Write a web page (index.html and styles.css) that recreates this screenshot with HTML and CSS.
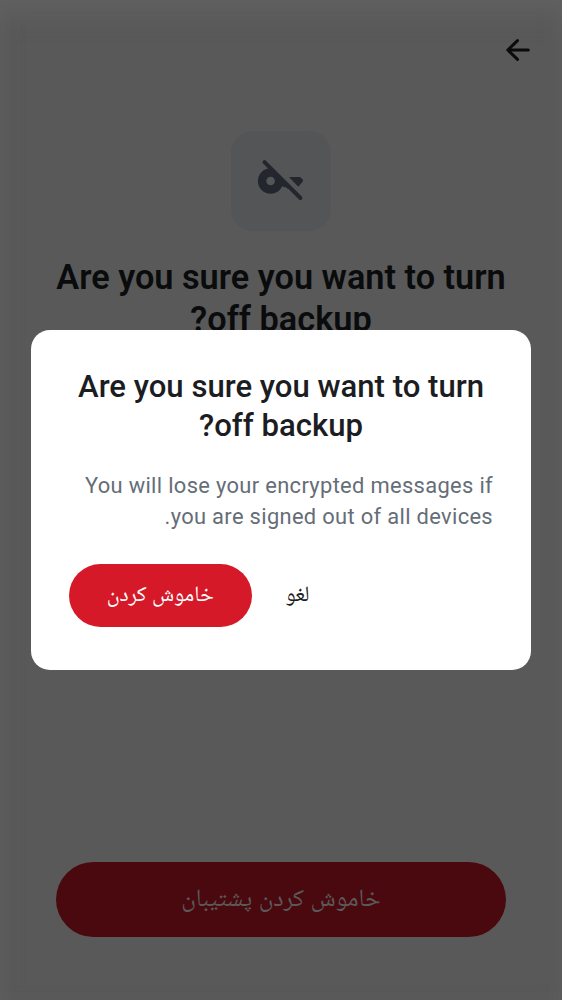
FILE: index.html
```html
<!DOCTYPE html>
<html lang="fa" dir="rtl">
<head>
<meta charset="utf-8">
<meta name="viewport" content="width=device-width">
<title>Backup</title>
<link rel="stylesheet" href="styles.css">
</head>
<body>
<main class="screen">
  <header class="topbar">
    <svg class="back" viewBox="0 0 24 22" aria-label="Back"><path d="M22.3 11H2M11.5 1.6L1.8 11l9.7 9.4"/></svg>
  </header>
  <div class="badge">
    <svg class="key" viewBox="0 0 50 44">
      <clipPath id="below"><path d="M0 -5L50 45H0Z"/></clipPath>
      <g clip-path="url(#below)">
        <circle class="ring" cx="14.6" cy="22" r="8.5"/>
        <path class="fill" d="M22 18H35V29.8H31.5L29.6 27.9L28 28.3L25.6 26.6H22Z"/>
      </g>
      <path class="fill" d="M33 18H44L46.6 20.6Q47.5 21.6 46.6 22.7L42.3 27.7Z"/>
      <path class="slash" d="M8.5 3.1L44.4 39"/>
    </svg>
  </div>
  <h1 class="heading">Are you sure you want to turn off backup?</h1>
  <button class="primary">خاموش کردن پشتیبان</button>
</main>
<div class="scrim">
  <section class="dialog" role="dialog">
    <h2 class="dialog-title">Are you sure you want to turn off backup?</h2>
    <p class="dialog-text">You will lose your encrypted messages if you are signed out of all devices.</p>
    <div class="actions">
      <button class="cancel">لغو</button>
      <button class="confirm">خاموش کردن</button>
    </div>
  </section>
</div>
</body>
</html>
```
FILE: styles.css
```css
* { box-sizing: border-box; }
body { margin: 0; font-family: Roboto, "Noto Naskh Arabic", "Noto Sans Arabic", "DejaVu Sans", sans-serif; }
button { border: 0; padding: 2px 0 0; font-family: inherit; }
.screen {
  display: flex;
  flex-direction: column;
  align-items: center;
  height: 1000px;
  padding: 0 56px 63px;
  background: #595959;
  box-shadow: inset 0 26px 26px -14px #616161, inset 12px 0 20px -10px #5f5f5f, inset -12px 0 20px -10px #5f5f5f;
}
.topbar { align-self: stretch; height: 131px; margin: 0 -24px; padding-top: 39px; }
.back { display: block; width: 24px; height: 22px; fill: none; stroke: #0a0b0c; stroke-width: 3; stroke-linecap: round; stroke-linejoin: round; }
.badge { display: flex; align-items: center; justify-content: center; width: 100px; height: 100px; border-radius: 22px; background: #545557; }
.key { width: 50px; height: 44px; }
.key .fill { fill: #23262c; }
.key .ring { fill: none; stroke: #23262c; stroke-width: 8.4; }
.key .slash { stroke: #23262c; stroke-width: 4; stroke-linecap: round; }
.heading { margin: 25px -10px 0; color: #0a0b0c; font-size: 34.3px; line-height: 42px; font-weight: 600; text-align: center; }
.primary { width: 450px; height: 75px; margin-top: auto; border-radius: 38px; background: #4a090f; color: #5a5a5a; font-size: 24.8px; word-spacing: .5px; }
.scrim { position: absolute; inset: 0; display: flex; align-items: center; justify-content: center; }
.dialog { width: 500px; height: 340px; padding: 37px 38px 43px; border-radius: 19px; background: #fff; }
.dialog-title { margin: 0; color: #1b1d22; font-size: 31.1px; line-height: 39px; font-weight: 500; text-align: center; }
.dialog-text { margin: 25px 0 0; color: #656d77; font-size: 21.9px; line-height: 31px; letter-spacing: .33px; }
.actions { display: flex; flex-direction: row; justify-content: flex-end; align-items: center; gap: 34px; margin-top: 32px; }
.cancel { background: none; color: #1b1d22; font-size: 21.9px; }
.confirm { width: 182.5px; height: 62.5px; border-radius: 32px; background: #d51928; color: #fff; font-size: 21.9px; }
```
